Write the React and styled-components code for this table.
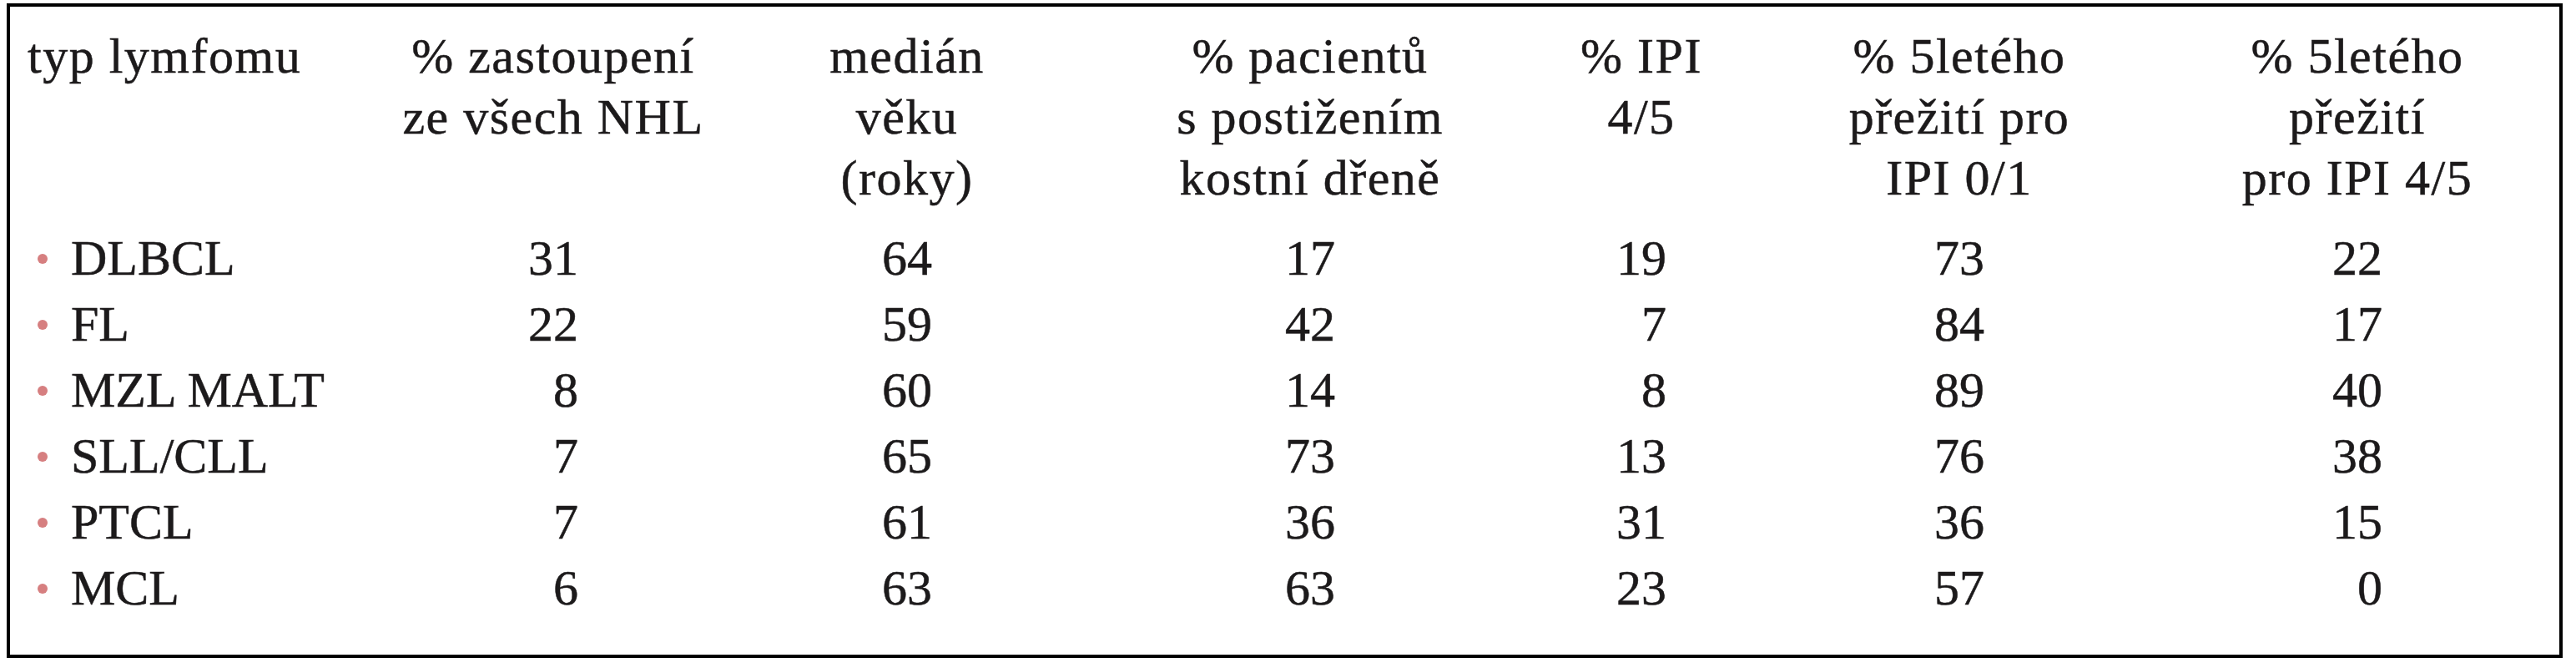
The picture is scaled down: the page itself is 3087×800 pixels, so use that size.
import React from "react";
import styled, { createGlobalStyle } from "styled-components";

// #region CSS
const GlobalStyle = createGlobalStyle`
  html, body {
    margin: 0;
    padding: 0;
    background: #ffffff;
  }
`;

const Frame = styled.div`
  box-sizing: border-box;
  width: 3063px;
  height: 784px;
  margin: 4px 0 0 8px;
  border: 4px solid #000;
  padding: 23px 31px 40px 0;
  background: #fff;
  font-family: "Liberation Serif", "Times New Roman", serif;
  color: #1c1a1b;
  -webkit-text-stroke: 0.5px #1c1a1b;
`;

const Table = styled.div`
  display: grid;
  grid-template-columns: 428px 446px 402px 564px 230px 532px 422px;
  font-family: "Liberation Serif", "Times New Roman", serif;
  font-size: 60px;
`;

const HeadCell = styled.div`
  line-height: 73px;
  white-space: nowrap;
  letter-spacing: 1.5px;
  margin-bottom: 20px;
  justify-self: ${(p) => (p.$left ? "start" : "center")};
  text-align: ${(p) => (p.$left ? "left" : "center")};
  padding-left: ${(p) => (p.$left ? "21px" : "0")};
`;

const LabelCell = styled.div`
  line-height: 79px;
  white-space: nowrap;
  padding-left: 33px;
`;

const Bullet = styled.span`
  display: inline-block;
  width: 12px;
  height: 12px;
  border-radius: 50%;
  background: #d67f80;
  margin-right: 28px;
  vertical-align: 13px;
`;

const NumCell = styled.div`
  line-height: 79px;
  justify-self: center;
`;

const Num = styled.span`
  display: inline-block;
  width: 60px;
  text-align: right;
`;
// #endregion

const headers = [
  ["typ lymfomu"],
  ["% zastoupení", "ze všech NHL"],
  ["medián", "věku", "(roky)"],
  ["% pacientů", "s postižením", "kostní dřeně"],
  ["% IPI", "4/5"],
  ["% 5letého", "přežití pro", "IPI 0/1"],
  ["% 5letého", "přežití", "pro IPI 4/5"],
];

const rows = [
  ["DLBCL", 31, 64, 17, 19, 73, 22],
  ["FL", 22, 59, 42, 7, 84, 17],
  ["MZL MALT", 8, 60, 14, 8, 89, 40],
  ["SLL/CLL", 7, 65, 73, 13, 76, 38],
  ["PTCL", 7, 61, 36, 31, 36, 15],
  ["MCL", 6, 63, 63, 23, 57, 0],
];

export default function App() {
  return (
    <>
      <GlobalStyle />
      <Frame>
        <Table>
          {headers.map((lines, i) => (
            <HeadCell key={i} $left={i === 0}>
              {lines.map((l, j) => (
                <div key={j}>{l}</div>
              ))}
            </HeadCell>
          ))}
          {rows.map(([label, ...values]) => (
            <React.Fragment key={label}>
              <LabelCell>
                <Bullet />
                {label}
              </LabelCell>
              {values.map((v, k) => (
                <NumCell key={k}>
                  <Num>{v}</Num>
                </NumCell>
              ))}
            </React.Fragment>
          ))}
        </Table>
      </Frame>
    </>
  );
}
